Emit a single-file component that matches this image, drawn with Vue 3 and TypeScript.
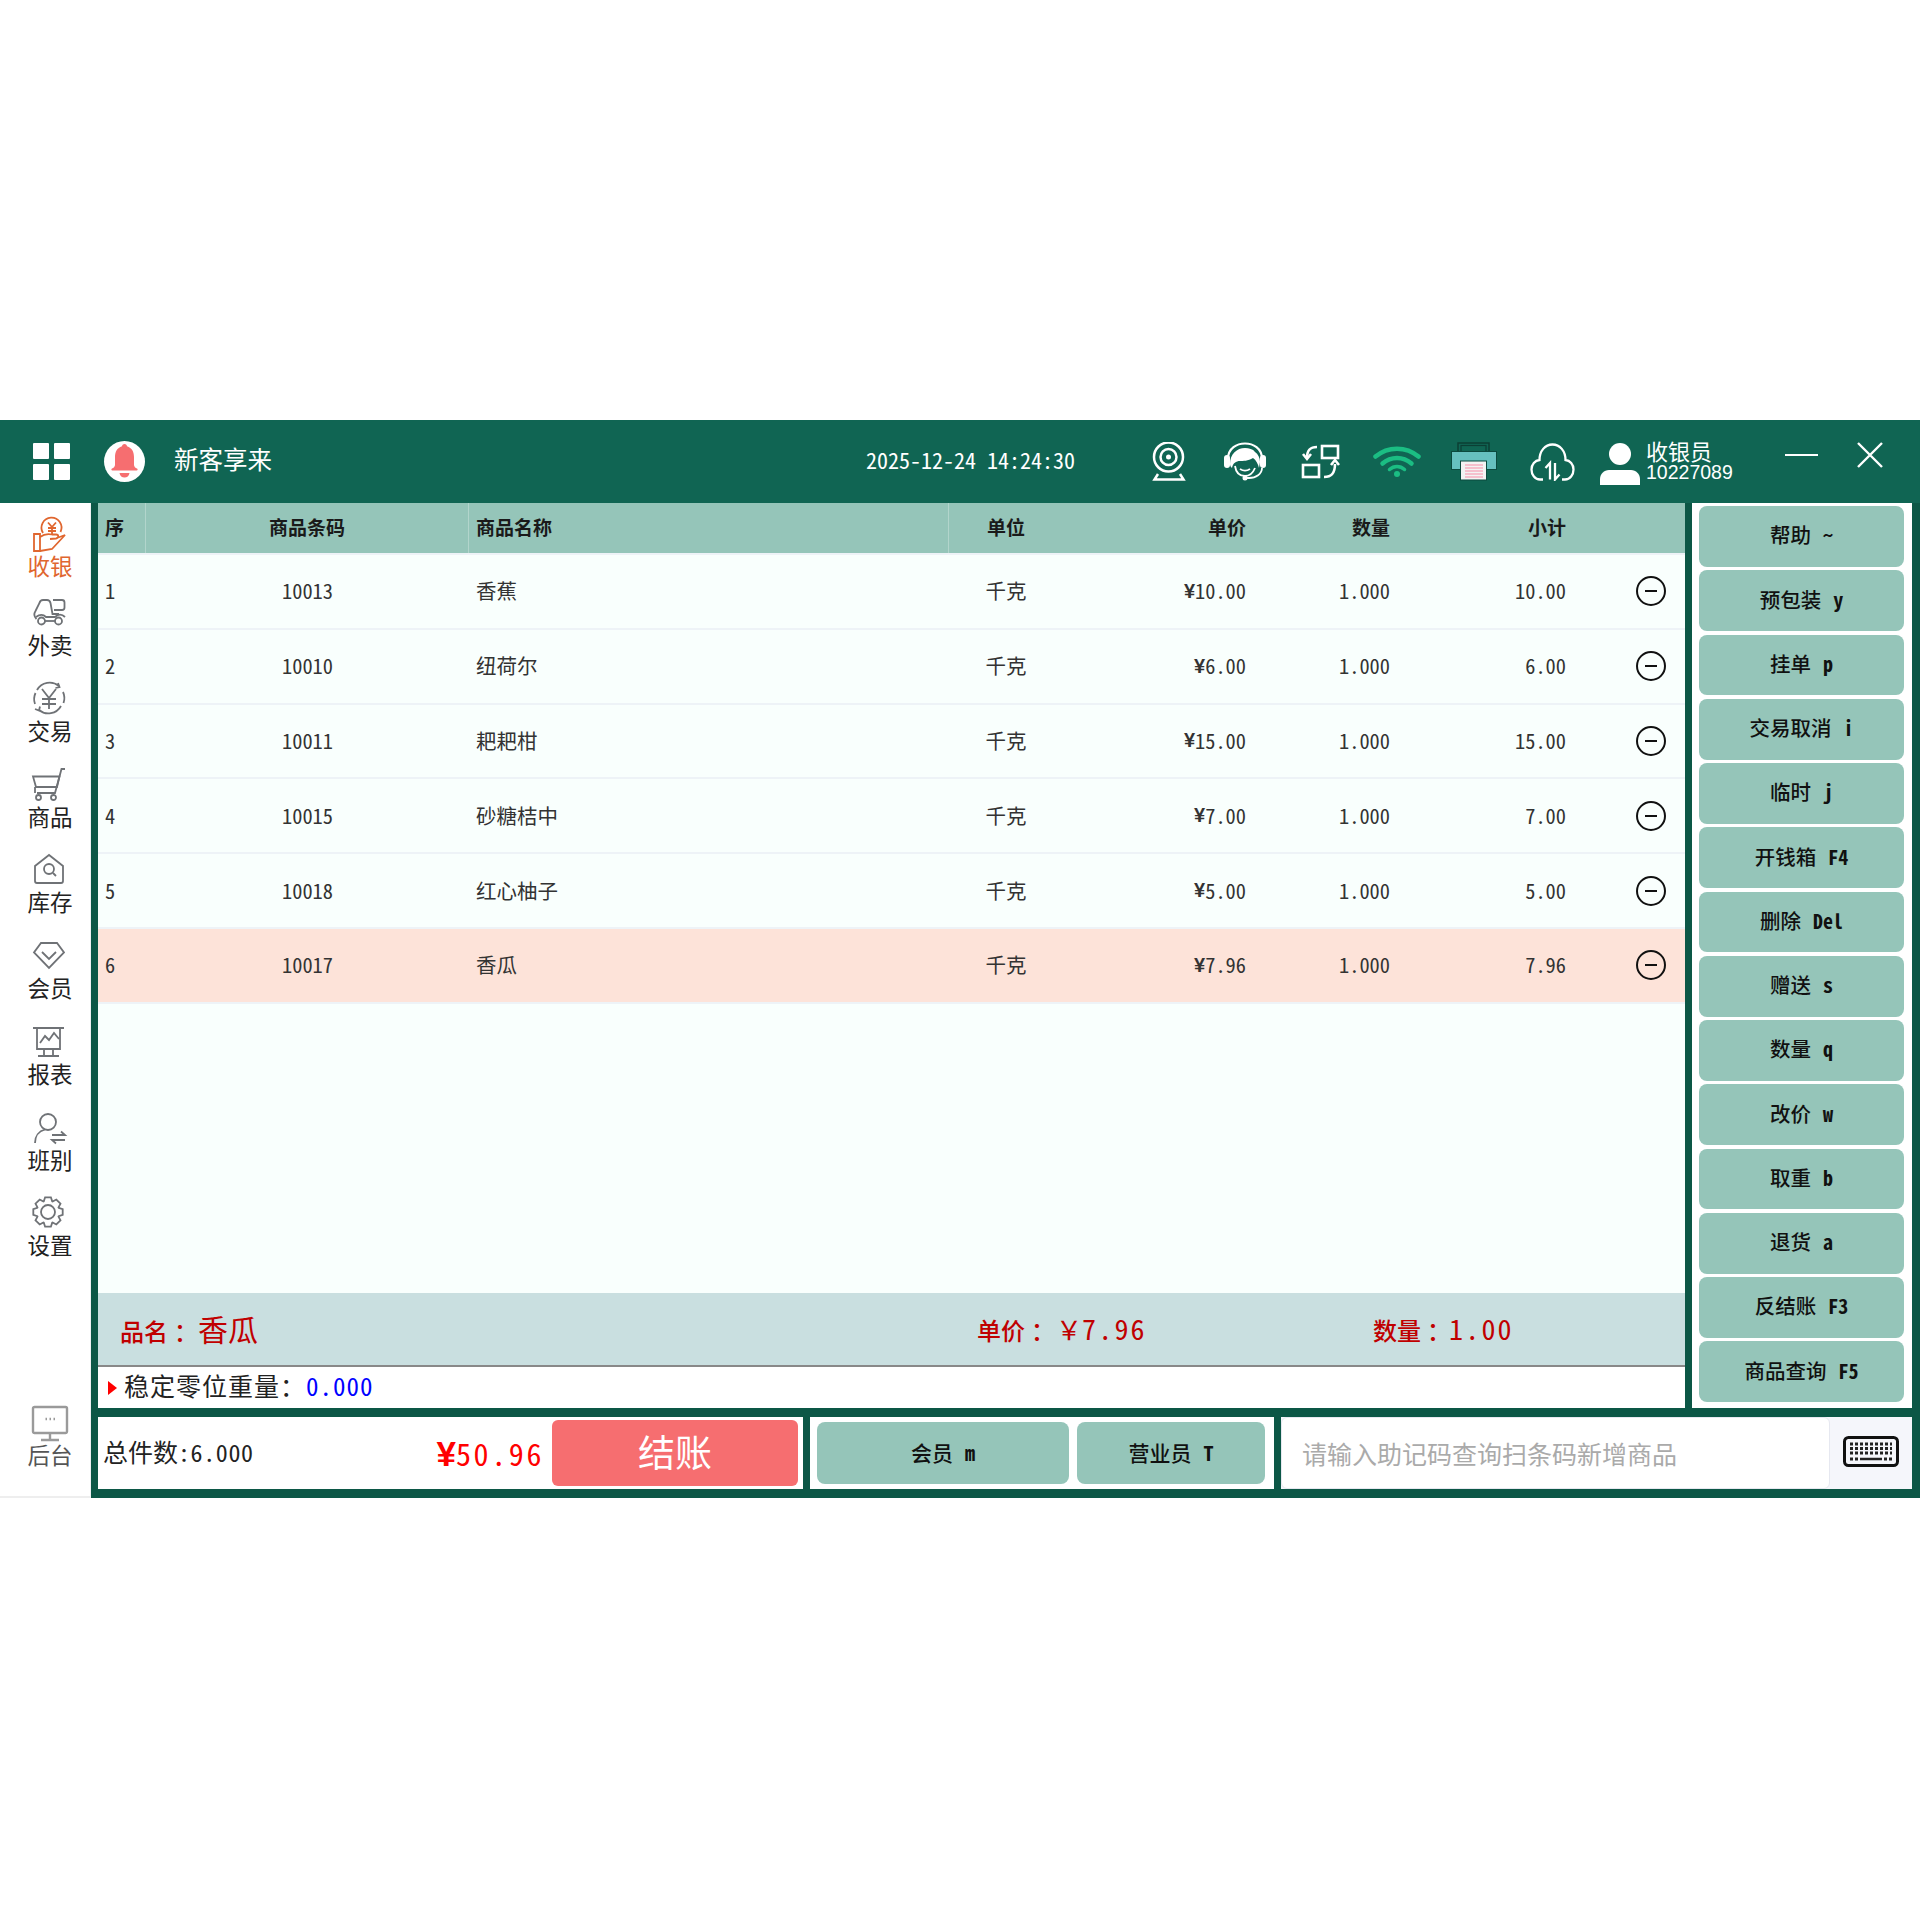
<script setup lang="ts">
interface NavItem {
  label: string
  paths: string[]
}

// gear outline for the settings item, teeth computed around the centre
function gearPath(cx: number, cy: number, outer: number, inner: number, teeth: number): string {
  const pts: string[] = []
  for (let i = 0; i < teeth; i++) {
    const a = (i / teeth) * Math.PI * 2
    const w = Math.PI / teeth
    const steps: [number, number][] = [
      [a - w * 0.95, inner],
      [a - w * 0.5, outer],
      [a + w * 0.5, outer],
      [a + w * 0.95, inner]
    ]
    for (const [ang, r] of steps) {
      pts.push(`${(cx + Math.cos(ang) * r).toFixed(1)} ${(cy + Math.sin(ang) * r).toFixed(1)}`)
    }
  }
  return 'M' + pts.join('L') + 'Z'
}

const navItems: NavItem[] = [
  {
    label: '收银',
    paths: [
      'M13 20A10 10 0 1 1 30.500 19',
      'M18 9.500l4 4.500 4-4.500M22 14v7M18 15h8M18 18h8',
      'M4 21h6v17H4z',
      'M10 24c4-3 8-3.500 12-2.500h4c3 0 3 3.500 0 4l-6 .5M27 25l8-3-13 14-12 2'
    ]
  },
  {
    label: '外卖',
    paths: [
      'M13 8h4c2 0 3 1 3.500 3l2 11H29',
      'M13 8c-2 0-3 1-3.500 3l-4 8c-2 3-1 6 1 8',
      'M23 8h9a2.500 2.500 0 0 1 2.500 2.500v5a2.500 2.500 0 0 1-2.500 2.500h-8',
      'M6 25c4-3 7-3 10 0h9c3-3 7-3 10 0',
      'M8 29a3.500 3.500 0 1 0 7 0a3.500 3.500 0 1 0-7 0z',
      'M25 29a3.500 3.500 0 1 0 7 0a3.500 3.500 0 1 0-7 0z',
      'M15 29h10'
    ]
  },
  {
    label: '交易',
    paths: [
      'M29 8A14.500 14.500 0 0 0 7 12',
      'M9 32A14.500 14.500 0 0 0 31 28',
      'M5 26A14.500 14.500 0 0 1 5.500 15M33 14a14.500 14.500 0 0 1 .5 11',
      'M28 5l1.500 4-4 1M5 31l4 1.500 1-4',
      'M12 11l7 9 7-9M19 20v11M12 21h14M12 26h14'
    ]
  },
  {
    label: '商品',
    paths: [
      'M35 5h-3.500L25 29H7',
      'M3 12.500h26.500L27 23H6z',
      'M5 23v6',
      'M6 33.500a2.500 2.500 0 1 0 5 0a2.500 2.500 0 1 0-5 0z',
      'M21 33.500a2.500 2.500 0 1 0 5 0a2.500 2.500 0 1 0-5 0z'
    ]
  },
  {
    label: '库存',
    paths: [
      'M19 6L5 17v15a2 2 0 0 0 2 2h24a2 2 0 0 0 2-2V17z',
      'M14 20a5 5 0 1 0 10 0a5 5 0 1 0-10 0z',
      'M23 24l3 3'
    ]
  },
  {
    label: '会员',
    paths: ['M11 8h16l7 9.500-15 15.500L4 17.500z', 'M12 17l7 7 7-7']
  },
  {
    label: '报表',
    paths: [
      'M3 7h31M7 7v21h23V7',
      'M10 22l5-7 4 4 5-7 5 6',
      'M14 28v6M23 28v6M8 35h21'
    ]
  },
  {
    label: '班别',
    paths: [
      'M10 15a8 8 0 1 0 16 0a8 8 0 1 0-16 0z',
      'M5 36c0-7 4-12 10-13.500',
      'M22 28h13l-4-3.500M35 33H22l4 3.500'
    ]
  },
  {
    label: '设置',
    paths: [gearPath(18, 20, 15, 11.5, 8), 'M11 20a7 7 0 1 0 14 0a7 7 0 1 0-14 0z']
  }
]

const backend: NavItem = {
  label: '后台',
  paths: [
    'M3 6.500a1.500 1.500 0 0 1 1.500-1.500h31a1.500 1.500 0 0 1 1.500 1.500v23a1.500 1.500 0 0 1-1.500 1.500h-31a1.500 1.500 0 0 1-1.500-1.500z',
    'M20 31v6M11 38h18',
    'M15.500 17h1.500M19.500 17h1.500M23.500 17h1.500'
  ]
}

const rows = [
  { no: 1, code: '10013', name: '香蕉', price: '10.00', total: '10.00' },
  { no: 2, code: '10010', name: '纽荷尔', price: '6.00', total: '6.00' },
  { no: 3, code: '10011', name: '耙耙柑', price: '15.00', total: '15.00' },
  { no: 4, code: '10015', name: '砂糖桔中', price: '7.00', total: '7.00' },
  { no: 5, code: '10018', name: '红心柚子', price: '5.00', total: '5.00' },
  { no: 6, code: '10017', name: '香瓜', price: '7.96', total: '7.96' }
]

const actions = [
  { label: '帮助', key: '~' },
  { label: '预包装', key: 'y' },
  { label: '挂单', key: 'p' },
  { label: '交易取消', key: 'i' },
  { label: '临时', key: 'j' },
  { label: '开钱箱', key: 'F4' },
  { label: '删除', key: 'Del' },
  { label: '赠送', key: 's' },
  { label: '数量', key: 'q' },
  { label: '改价', key: 'w' },
  { label: '取重', key: 'b' },
  { label: '退货', key: 'a' },
  { label: '反结账', key: 'F3' },
  { label: '商品查询', key: 'F5' }
]
</script>

<template>
  <div class="page">
    <div class="app">
      <header class="topbar">
        <div class="grid-icon"><i></i><i></i><i></i><i></i></div>
        <svg class="bell" viewBox="0 0 41 41">
          <circle cx="20.500" cy="20.500" r="20.500" fill="#fff" />
          <path
            fill="#f66e70"
            d="M20.500 3c-1.500 0-2.500 1-2.500 2.300C13 7 11 11 11 16v8c0 1.500-1.500 3-3 3.500-1 .4-.8 2 .4 2h24.200c1.200 0 1.400-1.600.4-2-1.500-.5-3-2-3-3.500v-8c0-5-2-9-7-10.700 0-1.300-1-2.300-2.500-2.300z"
          />
          <path fill="#f66e70" d="M15.500 32h10c-.5 3-2.500 4.500-5 4.500s-4.500-1.500-5-4.500z" />
        </svg>
        <div class="title">新客享来</div>
        <div class="clock">2025-12-24 14:24:30</div>

        <svg class="ico ico-camera" viewBox="0 0 34 39" fill="none" stroke="#fff" stroke-width="2.500">
          <circle cx="16.500" cy="15" r="14.500" />
          <circle cx="16.500" cy="15" r="8" />
          <circle cx="16.500" cy="15" r="2.500" fill="#fff" stroke="none" />
          <path d="M6 32l-3.500 5.500h29L28 32" />
        </svg>

        <svg class="ico ico-headset" viewBox="0 0 44 40" fill="none">
          <path d="M5 17C5 6 14 1.500 22 1.500S39 6 39 17" stroke="#fff" stroke-width="2.200" />
          <rect x="1" y="13" width="6" height="13" rx="3" fill="#fff" />
          <rect x="37" y="13" width="6" height="13" rx="3" fill="#fff" />
          <path
            fill="#fff"
            d="M7 22c0-10 7-16 15-16 4 0 8 1 10 4 3 2 5 6 5 10l-1 6c-1-4-3-8-6-10-5 3-10 3-13 3-4 0-7 2-8 7-1-1-2-2-2-4z"
          />
          <path d="M12 24c1 7 5 10 10 10s8-3 10-8" stroke="#fff" stroke-width="1.800" />
          <path d="M17 27c3 2 7 2 10 0" stroke="#fff" stroke-width="1.800" />
          <path d="M39 26c0 6-6 10-13 10h-2" stroke="#fff" stroke-width="1.800" />
          <circle cx="22" cy="36" r="2.500" fill="#fff" />
        </svg>

        <svg class="ico ico-switch" viewBox="0 0 39 35" fill="none" stroke="#fff" stroke-width="2.600">
          <rect x="21" y="2" width="16" height="12" />
          <rect x="2" y="21" width="16" height="12" />
          <path d="M16 3C9 3 6 6 6 14" />
          <path d="M2 10l4 5 4-5" />
          <path d="M23 33c8 0 11-4 11-13" />
          <path d="M30 21l4-5 4 5" />
        </svg>

        <svg class="ico ico-wifi" viewBox="0 0 48 31" fill="none" stroke="#1bbd83" stroke-width="4.500" stroke-linecap="round">
          <path d="M2.500 10.500C15 0 33 0 45.500 10.500" />
          <path d="M9.500 17.500C18 10 30 10 38.500 17.500" />
          <path d="M16.500 23.500C21 19.500 27 19.500 31.500 23.500" stroke-width="3.500" />
          <circle cx="24" cy="28" r="3" fill="#1bbd83" stroke="none" />
        </svg>

        <svg class="ico ico-printer" viewBox="0 0 46 39">
          <rect x="7" y="1" width="31" height="9" fill="none" stroke="#0b3f35" stroke-width="1.500" />
          <rect x="10" y="3.500" width="25" height="7" fill="none" stroke="#0b3f35" stroke-width="1.200" />
          <rect x="0.500" y="9.500" width="45" height="18" fill="#66c0bf" stroke="#0b4a3e" stroke-width="1" />
          <rect x="9.500" y="19" width="26" height="19" fill="#f3f3f3" stroke="#0b4a3e" stroke-width="1" />
          <path d="M14 23h18M14 26h18M14 29h18M14 32h18M14 35h18" stroke="#f5c0cd" stroke-width="1.800" />
        </svg>

        <svg class="ico ico-cloud" viewBox="0 0 45 38" fill="none" stroke="#fff" stroke-width="2.300">
          <path d="M13 36.500H10C5 36.500 1.500 32 1.500 26.500c0-5 3.500-9 8-9.500C9.500 8 15 1.500 22.500 1.500S35.500 8 35.500 17c4.500.5 8 4.500 8 9.500 0 5.500-3.500 10-8.500 10h-3" />
          <path d="M20 36.500V20l-4.500 5" />
          <path d="M25 20v16.500l4.500-5" />
        </svg>

        <svg class="ico ico-user" viewBox="0 0 40 42" fill="#fff">
          <circle cx="20" cy="11" r="11" />
          <path d="M0 42V36c0-5 4-9 9-9h22c5 0 9 4 9 9v6z" />
        </svg>
        <div class="cashier">
          <div class="cashier-role">收银员</div>
          <div class="cashier-id">10227089</div>
        </div>
        <div class="win-min"></div>
        <svg class="win-close" viewBox="0 0 26 26" fill="none" stroke="#fff" stroke-width="2.400">
          <path d="M1 1l24 24M25 1L1 25" />
        </svg>
      </header>

      <div class="body">
        <nav class="sidebar">
          <div
            v-for="(item, i) in navItems"
            :key="item.label"
            class="nav-item"
            :class="{ active: i === 0 }"
          >
            <svg class="nav-icon" viewBox="0 0 40 40" fill="none" stroke="currentColor" stroke-width="1.800">
              <path v-for="d in item.paths" :key="d" :d="d" />
            </svg>
            <span>{{ item.label }}</span>
          </div>
          <div class="nav-item backend">
            <svg class="nav-icon" viewBox="0 0 40 40" fill="none" stroke="currentColor" stroke-width="2.400">
              <path v-for="d in backend.paths" :key="d" :d="d" />
            </svg>
            <span>{{ backend.label }}</span>
          </div>
        </nav>

        <main class="main">
          <section class="upper">
            <div class="left">
              <div class="table">
                <div class="tr thead">
                  <div class="td c-no bar">序</div>
                  <div class="td c-code bar">商品条码</div>
                  <div class="td c-name bar">商品名称</div>
                  <div class="td c-unit">单位</div>
                  <div class="td c-right">单价</div>
                  <div class="td c-right">数量</div>
                  <div class="td c-right">小计</div>
                  <div class="td"></div>
                </div>
                <div
                  v-for="row in rows"
                  :key="row.no"
                  class="tr tbody"
                  :class="{ current: row.no === 6 }"
                >
                  <div class="td c-no"><span class="num">{{ row.no }}</span></div>
                  <div class="td c-code"><span class="num">{{ row.code }}</span></div>
                  <div class="td c-name">{{ row.name }}</div>
                  <div class="td c-unit">千克</div>
                  <div class="td c-right"><span class="yen">¥</span><span class="num">{{ row.price }}</span></div>
                  <div class="td c-right"><span class="num">1.000</span></div>
                  <div class="td c-right"><span class="num">{{ row.total }}</span></div>
                  <div class="td c-act">
                    <svg class="remove" viewBox="0 0 30 30" fill="none" stroke="#111" stroke-width="2">
                      <circle cx="15" cy="15" r="14" />
                      <path d="M9 15h12" />
                    </svg>
                  </div>
                </div>
              </div>

              <div class="info">
                <div class="info-name">品名<span class="colon c-name-colon">：</span><b>香瓜</b></div>
                <div class="info-price">单价<span class="colon c-price-colon">：</span><b>￥</b><span class="val">7.96</span></div>
                <div class="info-qty">数量<span class="colon c-qty-colon">：</span><span class="val">1.00</span></div>
              </div>

              <div class="weight">
                <i class="arrow"></i>
                <span class="weight-label">稳定零位重量：</span>
                <span class="weight-val">0.000</span>
              </div>
            </div>

            <aside class="actions">
              <button v-for="a in actions" :key="a.label" class="action" type="button">
                {{ a.label }}<span class="key">{{ a.key }}</span>
              </button>
            </aside>
          </section>

          <section class="lower">
            <div class="box totals">
              <span class="count">总件数<span class="num">:6.000</span></span>
              <span class="amount"><span class="yen">¥</span><span class="num">50.96</span></span>
              <button class="checkout" type="button">结账</button>
            </div>
            <div class="box members">
              <button class="member-btn wide" type="button">会员<span class="key">m</span></button>
              <button class="member-btn narrow" type="button">营业员<span class="key">T</span></button>
            </div>
            <div class="box search">
              <input class="search-input" type="text" placeholder="请输入助记码查询扫条码新增商品" />
              <div class="kbd">
                <svg viewBox="0 0 56 31" width="56" height="31" fill="none">
                  <rect x="1.500" y="1.500" width="53" height="28" rx="4" stroke="#111" stroke-width="3" />
                  <path d="M7 8h42M7 12.500h42M7 17h42" stroke="#222" stroke-width="3" stroke-dasharray="3 2" />
                  <path d="M7 23h8M41 23h8" stroke="#222" stroke-width="3" stroke-dasharray="3 2" />
                  <path d="M17 23h22" stroke="#222" stroke-width="2.500" />
                </svg>
              </div>
            </div>
          </section>
        </main>
      </div>
    </div>
  </div>
</template>

<style scoped>
.page {
  height: 1920px;
  padding-top: 420px;
  box-sizing: border-box;
  background: #fff;
  font-family: "Noto Sans CJK SC", "Liberation Sans", sans-serif;
  color: #222;
}

.app {
  display: flex;
  flex-direction: column;
  height: 1078px;
}

.topbar {
  display: flex;
  align-items: center;
  flex: 0 0 83px;
  padding-left: 33px;
  background: #106553;
  color: #fff;
}

.grid-icon {
  display: grid;
  grid-template-columns: 16px 16px;
  grid-auto-rows: 16px;
  gap: 5px;
  width: 38px;
}

.grid-icon i {
  background: #fff;
  border-radius: 1px;
}

.bell {
  width: 41px;
  height: 41px;
  margin-left: 33px;
}

.title {
  width: 692px;
  margin-left: 29px;
  margin-bottom: 5px;
  font-size: 24.500px;
  line-height: 30px;
}

.clock {
  width: 209px;
  margin-bottom: 6px;
  font-family: "Noto Sans Mono CJK SC", "Liberation Mono", monospace;
  font-size: 22px;
  white-space: nowrap;
}

.ico {
  flex: none;
}

.ico-camera {
  width: 34px;
  height: 39px;
  margin-left: 77px;
}

.ico-headset {
  width: 44px;
  height: 40px;
  margin-left: 37px;
}

.ico-switch {
  width: 39px;
  height: 35px;
  margin-left: 34px;
}

.ico-wifi {
  width: 48px;
  height: 31px;
  margin-left: 33px;
}

.ico-printer {
  width: 46px;
  height: 39px;
  margin-left: 30px;
}

.ico-cloud {
  width: 45px;
  height: 38px;
  margin-left: 33px;
}

.ico-user {
  width: 40px;
  height: 42px;
  margin-left: 25px;
  margin-top: 4px;
}

.cashier {
  width: 139px;
  margin-left: 6px;
  margin-bottom: 2px;
}

.cashier-role {
  font-size: 22px;
  line-height: 23px;
}

.cashier-id {
  font-family: "Liberation Sans", sans-serif;
  font-size: 19.500px;
  line-height: 20px;
}

.win-min {
  width: 33px;
  height: 2px;
  background: #fff;
  margin-bottom: 13px;
}

.win-close {
  width: 26px;
  height: 26px;
  margin-left: 39px;
  margin-bottom: 14px;
}

.body {
  flex: 1;
  display: flex;
  min-height: 0;
}

.sidebar {
  flex: 0 0 90px;
  box-sizing: border-box;
  display: flex;
  flex-direction: column;
  padding: 10px 0 28px 10px;
  background: #fff;
  border-right: 1px solid #eef0f2;
  border-bottom: 2px solid #eeeeee;
}

.nav-item {
  display: flex;
  flex-direction: column;
  align-items: center;
  height: 66px;
  width: 80px;
  margin-bottom: 19.750px;
  color: #6f7276;
  font-size: 22.500px;
}

.nav-item:first-child {
  margin-bottom: 13px;
}

.nav-item span {
  line-height: 24px;
  color: #222;
}

.nav-item.active,
.nav-item.active span {
  color: #e0662f;
}

.nav-icon {
  width: 40px;
  height: 40px;
  flex: none;
}

.backend {
  margin-top: auto;
  margin-bottom: 0;
  color: #9a9a9a;
}

.backend span {
  color: #555;
}

.main {
  flex: 1;
  display: flex;
  flex-direction: column;
  gap: 9px;
  padding: 0 8px 9px 7px;
  background: #0c5746;
  min-width: 0;
}

.upper {
  flex: 0 0 905px;
  display: flex;
  gap: 7px;
  min-height: 0;
}

.left {
  flex: 0 0 1587px;
  display: flex;
  flex-direction: column;
  min-width: 0;
}

.table {
  flex: 1;
  background: #f9fffd;
}

.tr {
  display: grid;
  grid-template-columns: 48px 323px 480px 114px 184px 144px 176px 118px;
  align-items: stretch;
}

.thead {
  height: 52px;
  box-sizing: border-box;
  background: #95c5b9;
  border-bottom: 2px solid #eef3f7;
  font-size: 19px;
  font-weight: 700;
  color: #1a1a1a;
}

.thead .td {
  padding-bottom: 4px;
}

.tbody {
  height: 74.800px;
  box-sizing: border-box;
  border-bottom: 2px solid #eef3f7;
  font-size: 20.500px;
  color: #333;
}

.tbody.current {
  background: #fde3d9;
}

.td {
  display: flex;
  align-items: center;
  box-sizing: border-box;
  min-width: 0;
}

.bar {
  border-right: 1px solid #b2d5cc;
}

.c-no {
  padding-left: 7px;
}

.c-code,
.c-unit {
  justify-content: center;
}

.c-name {
  padding-left: 7px;
}

.tbody .c-name,
.tbody .c-unit {
  padding-bottom: 2px;
}

.c-right {
  justify-content: flex-end;
  padding-right: 1px;
}

.tbody .c-act {
  justify-content: flex-end;
  padding-right: 19px;
}

.num {
  font-family: "Noto Sans Mono CJK SC", "Liberation Mono", monospace;
  font-size: 20.400px;
}

.tbody .num {
  margin-bottom: 2px;
}

.yen {
  font-family: "Liberation Sans", sans-serif;
  font-weight: 700;
  font-size: 20px;
}

.remove {
  width: 30px;
  height: 30px;
}

.info {
  flex: 0 0 74px;
  display: grid;
  grid-template-columns: 857px 396px 1fr;
  align-items: center;
  box-sizing: border-box;
  padding: 0 0 2px 22px;
  background: #c9dfe0;
  border-bottom: 2px solid #888;
  color: #c00000;
  font-size: 24px;
  font-weight: 500;
  white-space: nowrap;
}

.colon {
  display: inline-block;
  text-indent: 6px;
}

.c-name-colon {
  width: 30px;
}

.c-price-colon {
  width: 31px;
}

.c-qty-colon {
  width: 28px;
}

.info b {
  font-weight: 400;
  font-size: 30px;
}

.info-price b {
  font-size: 26px;
}

.val {
  font-family: "Noto Sans Mono CJK SC", "Liberation Mono", monospace;
  font-size: 28px;
  font-weight: 400;
  letter-spacing: 2.200px;
}

.weight {
  flex: 0 0 41px;
  display: flex;
  align-items: center;
  box-sizing: border-box;
  padding: 0 0 5px 10px;
  background: #fff;
  color: #222;
}

.weight-label {
  font-size: 25px;
  letter-spacing: 1px;
}

.arrow {
  width: 0;
  height: 0;
  margin-top: 5px;
  margin-right: 7px;
  border-left: 9px solid #f00;
  border-top: 7.500px solid transparent;
  border-bottom: 7.500px solid transparent;
}

.weight-val {
  font-family: "Noto Sans Mono CJK SC", "Liberation Mono", monospace;
  font-size: 25px;
  letter-spacing: 1px;
  color: #00f;
}

.actions {
  flex: 1;
  box-sizing: border-box;
  display: grid;
  grid-template-rows: repeat(14, 1fr);
  gap: 3.500px;
  padding: 3px 8px 6px 7px;
  background: #fff;
}

.action,
.member-btn {
  border: none;
  border-radius: 8px;
  background: #95c5b9;
  font-family: inherit;
  font-size: 20.500px;
  font-weight: 500;
  color: #111;
  padding: 0 0 4px;
}

.key {
  margin-left: 12px;
  font-family: "Noto Sans Mono CJK SC", "Liberation Mono", monospace;
  font-size: 20px;
  font-weight: 700;
}

.lower {
  flex: 0 0 72px;
  display: flex;
  gap: 7px;
}

.box {
  display: flex;
  align-items: center;
  background: #fff;
  box-sizing: border-box;
}

.totals {
  flex: 0 0 705px;
  padding: 0 5px 0 5px;
}

.count {
  font-size: 25px;
  white-space: nowrap;
  margin-bottom: 4px;
}

.count .num {
  font-size: 24px;
  letter-spacing: .6px;
}

.amount {
  margin-left: auto;
  color: #f00;
  white-space: nowrap;
}

.amount .yen {
  font-size: 35px;
  font-weight: 700;
}

.amount .num {
  font-size: 30px;
  letter-spacing: 2.600px;
}

.checkout {
  flex: 0 0 246px;
  height: 66px;
  margin-left: 8px;
  border: none;
  border-radius: 6px;
  background: #f66e70;
  color: #fff;
  font-family: inherit;
  font-size: 37px;
  padding: 0 0 4px;
}

.members {
  flex: 0 0 464px;
  gap: 8px;
  padding: 0 9px 0 7px;
}

.member-btn {
  height: 62px;
  font-size: 21px;
  padding-bottom: 2px;
}

.wide {
  flex: 0 0 252px;
}

.narrow {
  flex: 0 0 188px;
}

.search {
  flex: 1;
  background: #f5f6fb;
  min-width: 0;
}

.search-input {
  flex: 0 0 549px;
  height: 100%;
  box-sizing: border-box;
  padding: 0 0 0 20px;
  border: 1px solid #e6e8f0;
  border-radius: 6px;
  outline: none;
  background: #fff;
  font-family: inherit;
  font-size: 25px;
}

.search-input::placeholder {
  color: #aaa;
}

.kbd {
  flex: 1;
  display: flex;
  justify-content: center;
  padding-bottom: 4px;
}
</style>
